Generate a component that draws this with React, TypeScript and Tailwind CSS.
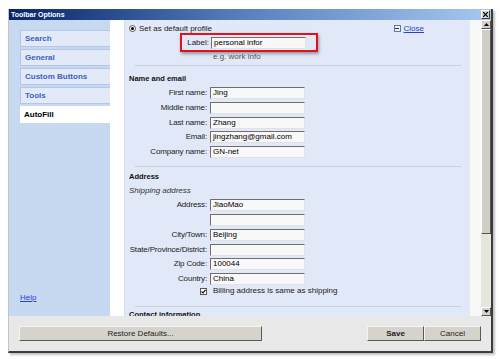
const TABS = ["Search", "General", "Custom Buttons", "Tools"];

const NAME_ROWS: [string, string][] = [
  ["First name:", "Jing"],
  ["Middle name:", ""],
  ["Last name:", "Zhang"],
  ["Email:", "jingzhang@gmail.com"],
  ["Company name:", "GN-net"],
];

const ADDRESS_ROWS: [string, string][] = [
  ["Address:", "JiaoMao"],
  ["", ""],
  ["City/Town:", "Beijing"],
  ["State/Province/District:", ""],
  ["Zip Code:", "100044"],
  ["Country:", "China"],
];

function Field({ value }: { value: string }) {
  return (
    <div className="h-[12px] w-[95px] shrink-0 overflow-hidden whitespace-nowrap border border-t-[#6f6f6f] border-l-[#6f6f6f] border-r-[#e2e2e2] border-b-[#e2e2e2] bg-[#f8f8f8] pl-[2px] text-[8px] leading-[10px] text-black">
      {value}
    </div>
  );
}

function Row({ label, value }: { label: string; value: string }) {
  return (
    <div className="flex h-[12px] items-center">
      <span className="flex w-[81px] shrink-0 justify-end whitespace-nowrap pr-[3px] text-[8px] leading-[10px] tracking-[-0.15px] text-[#222]">
        {label}
      </span>
      <Field value={value} />
    </div>
  );
}

function Rule() {
  return <div className="ml-[6px] h-px w-[326px] bg-[#c8d0e2]" />;
}

function WinButton({ children, className = "" }: { children: React.ReactNode; className?: string }) {
  return (
    <div
      className={`flex h-[15px] items-center justify-center border border-t-[#f4f4f4] border-l-[#f4f4f4] border-r-[#5a5a5a] border-b-[#5a5a5a] bg-[#d6d3cc] text-[8px] leading-[10px] text-[#222] ${className}`}
    >
      {children}
    </div>
  );
}

export default function App() {
  return (
    <div
      className="h-[359px] w-[500px] overflow-hidden bg-white pl-[8px] pt-[9px]"
      style={{ fontFamily: '"Liberation Sans", Arial, sans-serif' }}
    >
      <div className="flex h-[344px] w-[485px] flex-col border-l border-r-2 border-b-2 border-l-[#c4c4c4] border-r-[#3c3c3c] border-b-[#3c3c3c] shadow-[2px_2px_2px_rgba(0,0,0,0.25)]">
        {/* title bar */}
        <div className="flex h-[11px] shrink-0 items-center bg-gradient-to-r from-[#0a246a] via-[#5a82c0] to-[#a8c8f0] pl-[2px] pr-[1px]">
          <span className="text-[7px] font-bold leading-[9px] text-white">Toolbar Options</span>
          <div className="ml-auto flex h-[9px] w-[9px] items-center justify-center border border-t-white border-l-white border-r-[#404040] border-b-[#404040] bg-[#d4d0c8]">
            <svg width="5" height="5" viewBox="0 0 5 5">
              <path d="M0 0L5 5M5 0L0 5" stroke="#000" strokeWidth="1.2" />
            </svg>
          </div>
        </div>

        {/* body */}
        <div className="flex h-[296px] shrink-0">
          {/* sidebar */}
          <div className="flex w-[101px] shrink-0 flex-col bg-[#c7d8f1] pl-[11px] pt-[10px]">
            {TABS.map((t) => (
              <div
                key={t}
                className="mb-[2px] flex h-[17px] w-[90px] items-center border border-r-0 border-[#b4c7e8] bg-[#e2eaf8] pl-[4px] text-[8px] font-bold text-[#3d5fc4]"
              >
                {t}
              </div>
            ))}
            <div className="flex h-[17px] w-[90px] items-center bg-white pl-[4px] text-[8px] font-bold text-black">
              AutoFill
            </div>
            <span className="mb-[13px] mt-auto text-[8px] leading-[10px] text-[#2a3fd0] underline">Help</span>
          </div>

          <div className="w-[15px] shrink-0 border-r border-[#d3dbea] bg-white" />

          {/* panel */}
          <div className="flex w-[345px] shrink-0 flex-col overflow-hidden bg-[#e1e8f7] pl-[4px] pt-[3px] *:shrink-0">
            <div className="flex h-[11px] items-center">
              <div className="flex h-[7px] w-[7px] items-center justify-center rounded-full border border-[#555] bg-white">
                <div className="h-[3px] w-[3px] rounded-full bg-black" />
              </div>
              <span className="ml-[3px] text-[8px] leading-[10px] text-[#222]">Set as default profile</span>
              <div className="ml-auto mr-[46px] flex items-center">
                <div className="flex h-[7px] w-[7px] items-center justify-center border border-[#6477a8] bg-[#eef2fb]">
                  <div className="h-px w-[4px] bg-[#334]" />
                </div>
                <span className="ml-[3px] text-[8px] leading-[10px] text-[#2a3fd0] underline">Close</span>
              </div>
            </div>

            <div className="ml-[51px] mt-[-1px] flex h-[19px] w-[138px] items-center border-2 border-[#e3121a] shadow-[1px_2px_3px_rgba(0,0,0,0.35)]">
              <span className="w-[29px] shrink-0 pr-[2px] text-right text-[8px] leading-[10px] text-[#222]">Label:</span>
              <Field value="personal infor" />
            </div>
            <span className="ml-[84px] text-[8px] leading-[9px] text-[#555]">e.g. work info</span>

            <div className="mt-[4px]">
              <Rule />
            </div>
            <span className="mt-[8px] text-[7.5px] font-bold leading-[10px] text-[#111]">Name and email</span>

            <div className="mt-[3px] flex flex-col gap-[2.8px]">
              {NAME_ROWS.map(([l, v]) => (
                <Row key={l} label={l} value={v} />
              ))}
            </div>

            <div className="mt-[8px]">
              <Rule />
            </div>
            <span className="mt-[5px] text-[7.5px] font-bold leading-[10px] text-[#111]">Address</span>
            <span className="mt-[4px] text-[8px] italic leading-[10px] text-[#333]">Shipping address</span>

            <div className="mt-[3px] flex flex-col gap-[2.8px]">
              {ADDRESS_ROWS.map(([l, v], i) => (
                <Row key={i} label={l} value={v} />
              ))}
            </div>

            <div className="mt-px flex h-[10px] items-center pl-[71px]">
              <div className="flex h-[7px] w-[7px] items-center justify-center border border-[#555] bg-white">
                <svg width="5" height="5" viewBox="0 0 5 5">
                  <path d="M0.5 2.5L2 4L4.5 0.8" stroke="#000" strokeWidth="1.1" fill="none" />
                </svg>
              </div>
              <span className="ml-[6px] text-[8px] leading-[10px] text-[#222]">Billing address is same as shipping</span>
            </div>

            <div className="mt-[10px]">
              <Rule />
            </div>
            <span className="mt-[3px] text-[7.5px] font-bold leading-[10px] text-[#111]">Contact information</span>
          </div>

          <div className="w-[11px] shrink-0 bg-[#f8f8f8]" />

          {/* scrollbar */}
          <div className="flex w-[10px] shrink-0 flex-col bg-[#e6e6df]">
            <div className="flex h-[9px] items-center justify-center border border-t-white border-l-white border-r-[#555] border-b-[#555] bg-[#d4d0c8]">
              <svg width="5" height="3" viewBox="0 0 5 3">
                <path d="M2.5 0L5 3H0z" fill="#000" />
              </svg>
            </div>
            <div className="h-[205px] border border-t-white border-l-white border-r-[#555] border-b-[#555] bg-[#d0cec6]" />
            <div className="flex-1" />
            <div className="flex h-[9px] items-center justify-center border border-t-white border-l-white border-r-[#555] border-b-[#555] bg-[#d4d0c8]">
              <svg width="5" height="3" viewBox="0 0 5 3">
                <path d="M0 0H5L2.5 3z" fill="#000" />
              </svg>
            </div>
          </div>
        </div>

        {/* footer */}
        <div className="flex flex-1 items-start bg-[#e8e8e8] pl-[10px] pr-[10px] pt-[10px]">
          <WinButton className="w-[243px]">Restore Defaults...</WinButton>
          <WinButton className="ml-auto w-[57px] font-bold">Save</WinButton>
          <WinButton className="w-[57px]">Cancel</WinButton>
        </div>
      </div>
    </div>
  );
}
